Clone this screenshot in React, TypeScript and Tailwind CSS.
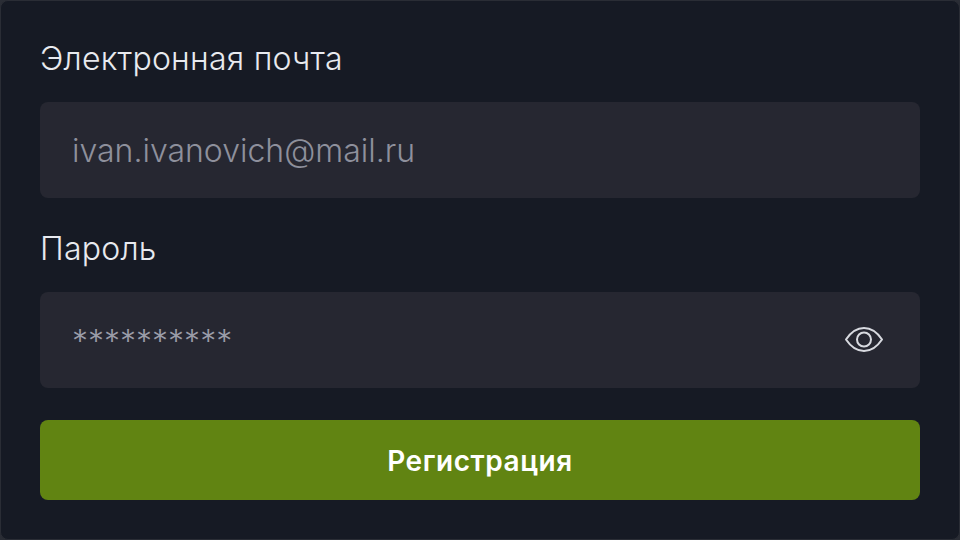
export default function App() {
  return (
    <div className="h-[540px] w-[960px] overflow-hidden bg-[#2a2d35] font-['Inter','Liberation_Sans',sans-serif]">
      <form className="flex h-[540px] flex-col rounded-[8px] border border-[#2a2d35] bg-[#161a24] px-[39px] pt-[39px]">
        <label htmlFor="email" className="h-[38px] text-[32px] font-light tracking-[0.24px] leading-[38px] text-[#e8eaef]">
          Электронная почта
        </label>
        <input
          id="email"
          readOnly
          placeholder="ivan.ivanovich@mail.ru"
          className="mt-[24px] h-[96px] w-full rounded-[8px] bg-[#262731] px-[32px] pt-[1px] text-[32px] font-light leading-[40px] text-[#8e909c] outline-none placeholder:text-[#8e909c]"
        />
        <label htmlFor="password" className="mt-[32px] h-[38px] text-[32px] font-light tracking-[0.24px] leading-[38px] text-[#e8eaef]">
          Пароль
        </label>
        <div className="mt-[24px] flex h-[96px] items-center justify-between rounded-[8px] bg-[#262731] pl-[32px] pr-[36px]">
          <input
            id="password"
            readOnly
            placeholder="**********"
            className="w-[400px] pt-[4px] text-[32px] font-light leading-[40px] text-[#9a9ca8] outline-none placeholder:text-[#9a9ca8]"
          />
          <svg width="40" height="40" viewBox="0 0 40 40" fill="none" stroke="#d8dae0" strokeWidth="2">
            <path d="M2 19.500C7 12 13 8 20 8S33 12 38 19.500C33 27 27 31 20 31S7 27 2 19.500Z" strokeLinejoin="round" />
            <circle cx="20" cy="19.500" r="7" />
          </svg>
        </div>
        <button type="button" className="mt-[32px] h-[80px] w-full rounded-[8px] bg-[#618412] pt-[2px] text-[28px] font-semibold tracking-[0.55px] text-white">
          Регистрация
        </button>
      </form>
    </div>
  )
}
